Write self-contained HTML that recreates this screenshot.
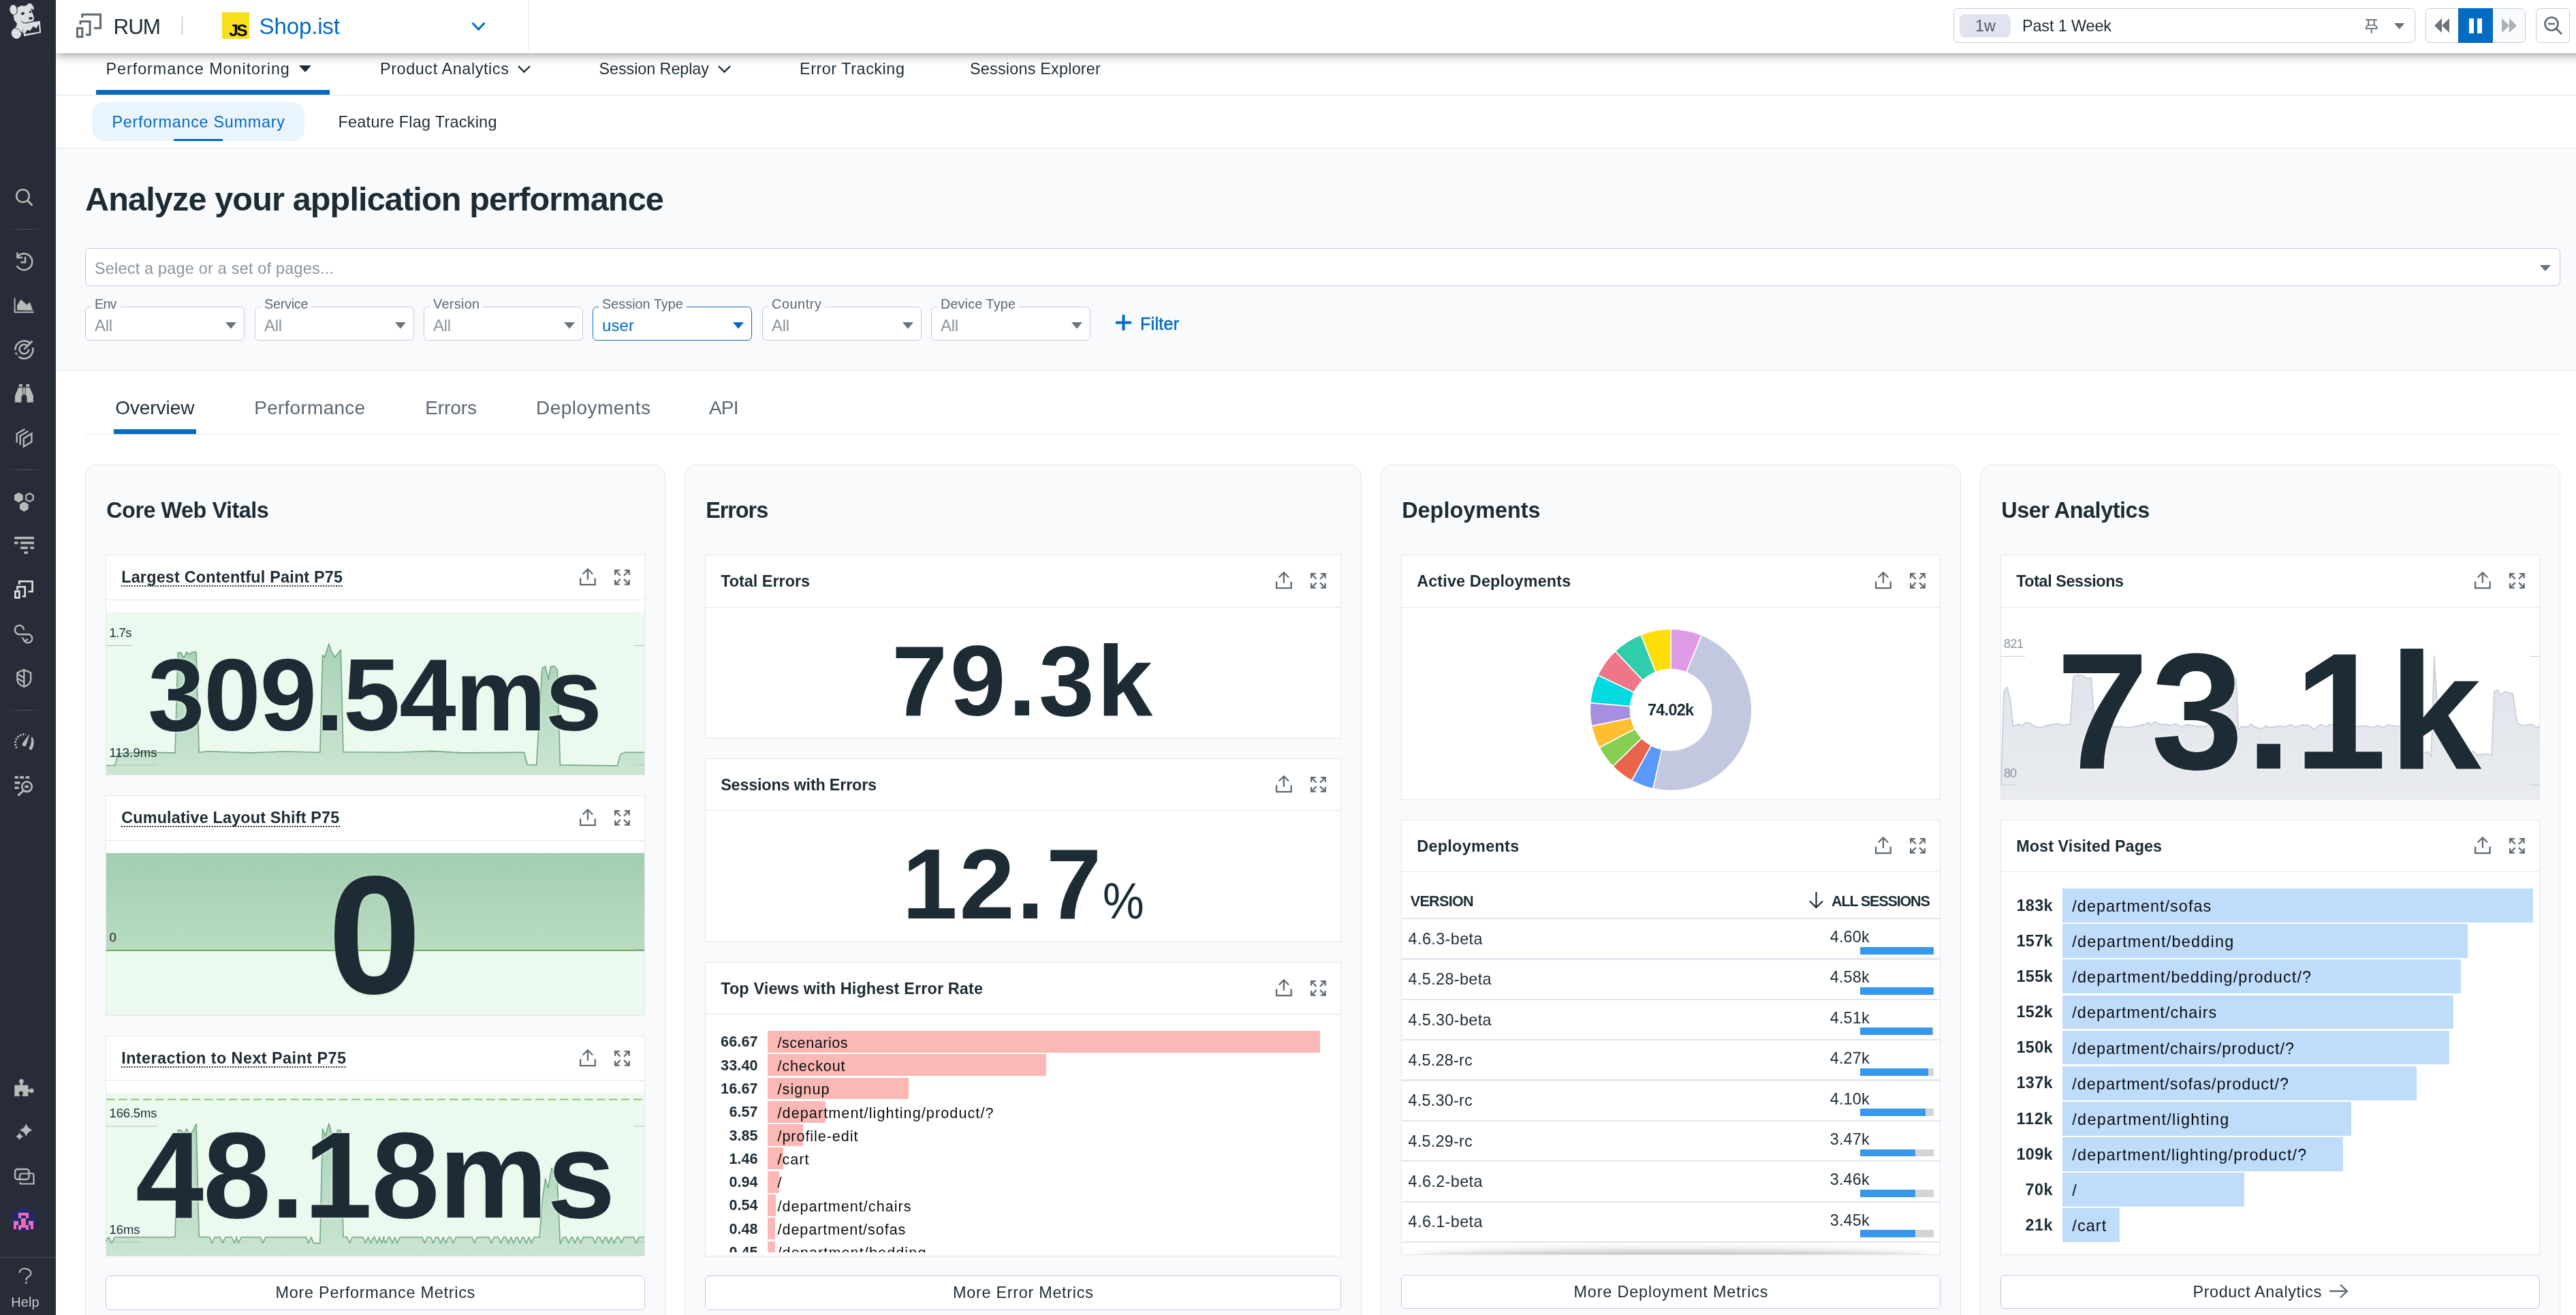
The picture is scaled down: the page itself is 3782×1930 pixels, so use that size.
<!DOCTYPE html>
<html lang="en"><head><meta charset="utf-8"><title>RUM Performance Summary</title>
<style>
html,body{margin:0;padding:0;}
body{width:3782px;height:1930px;overflow:hidden;position:relative;background:#fff;font-family:"Liberation Sans",sans-serif;color:#1c2b34;}
.t{position:absolute;white-space:nowrap;line-height:1;}
div{box-sizing:border-box;}
svg{overflow:visible;}
#root{position:absolute;left:0;top:0;width:3782px;height:1930px;overflow:hidden;opacity:0.9999;}
</style></head><body><div id="root">
<div style="position:absolute;left:82px;top:218px;width:3700px;height:326px;background:#f9fafb;border-bottom:1px solid #e2e5ed;"></div>
<div style="position:absolute;left:82px;top:78px;width:3700px;height:62px;background:#fff;border-bottom:1px solid #e2e5ed;"></div>
<div style="position:absolute;left:82px;top:140px;width:3700px;height:78px;background:#fff;border-bottom:1px solid #e2e5ed;"></div>
<div style="position:absolute;left:82px;top:0px;width:3760px;height:78px;background:#fff;box-shadow:0 3px 14px 0 rgba(0,0,0,0.38);z-index:5;"></div>
<div style="position:absolute;left:0;top:0;width:3782px;height:78px;z-index:6;">
<svg style="position:absolute;left:0px;top:0px;" width="200" height="78" viewBox="0 0 200 78"><path d="M120.7 26V21.3H147.5V41.2H138" fill="none" stroke="#5c6873" stroke-width="3"/><path d="M118 36V31.4H132.1V50.9H126" fill="none" stroke="#5c6873" stroke-width="3"/><rect x="113.5" y="41.4" width="7.3" height="12.6" fill="none" stroke="#5c6873" stroke-width="3"/></svg>
<span class="t" style="left:166.6px;top:23.6px;font-size:31.5px;letter-spacing:-1.12px;">RUM</span>
<div style="position:absolute;left:266px;top:24px;width:2.8px;height:27px;background:#e1e4ef;border-radius:1px;"></div>
<div style="position:absolute;left:326px;top:18px;width:40px;height:39px;background:#f7df1e;"></div>
<span class="t" style="left:336.2px;top:33.4px;font-size:24.5px;font-weight:700;color:#000;letter-spacing:-2.47px;">JS</span>
<span class="t" style="left:380.5px;top:22.2px;font-size:33.2px;color:#006bc2;letter-spacing:-0.21px;">Shop.ist</span>
<svg style="position:absolute;left:692px;top:32px;" width="22" height="14" viewBox="0 0 22 14"><path d="M1.5 1.5L10.5 11L19.5 1.5" fill="none" stroke="#006bc2" stroke-width="3"/></svg>
<div style="position:absolute;left:776px;top:0px;width:1px;height:78px;background:#e2e5ed;"></div>
<div style="position:absolute;left:2868px;top:12px;width:678px;height:51px;background:#fff;border:1px solid #c2c8e0;border-radius:6.5px;"></div>
<div style="position:absolute;left:2877px;top:20.5px;width:75px;height:34.5px;background:#e1e4ef;border-radius:8px;"></div>
<span class="t" style="left:2900.0px;top:27.4px;font-size:23.4px;color:#4f5a63;letter-spacing:0.09px;">1w</span>
<span class="t" style="left:2969.0px;top:27.4px;font-size:23.4px;letter-spacing:-0.12px;">Past 1 Week</span>
<svg style="position:absolute;left:3472px;top:28px;" width="20" height="22" viewBox="0 0 20 22"><g fill="none" stroke="#5f6a72"><path d="M1.2 1.05H17.9" stroke-width="1.8"/><path d="M5.25 1.9V9M13.8 1.9V9M9.75 14.7V20.9" stroke-width="1.9"/><path d="M5.25 9H13.8M0.8 13.95H18.7M1.7 13.9C1.7 11.3 3 9.6 5.3 9M17.8 13.9C17.8 11.3 16.2 9.6 13.8 9" stroke-width="1.7"/></g></svg>
<svg style="position:absolute;left:3514.9px;top:34.2px;" width="15.4" height="8.7" viewBox="0 0 15.4 8.7"><path d="M0 0h15.4l-7.7 8.7z" fill="#6a737c"/></svg>
<div style="position:absolute;left:3561px;top:12px;width:147px;height:51px;background:#fff;border:1px solid #c2c8e0;border-radius:6.5px;overflow:hidden;"><div style="position:absolute;left:47px;top:-1px;width:51px;height:51px;background:#006bc2;"></div><div style="position:absolute;left:98px;top:-1px;width:49px;height:51px;background:#f9fafb;"></div></div>
<div style="position:absolute;left:3609px;top:12px;width:51px;height:51px;background:#006bc2;"></div>
<svg style="position:absolute;left:3574px;top:27px;" width="23" height="21" viewBox="0 0 23 21"><path d="M11 0v21L0 10.5zM22 0v21L11 10.5z" fill="#6a737c"/></svg>
<svg style="position:absolute;left:3625px;top:26.5px;" width="19" height="22" viewBox="0 0 19 22"><rect x="0" y="0" width="7" height="22" fill="#fff"/><rect x="12" y="0" width="7" height="22" fill="#fff"/></svg>
<svg style="position:absolute;left:3673px;top:27px;" width="23" height="21" viewBox="0 0 23 21"><path d="M0 0v21l11-10.5zM11 0v21l11-10.5z" fill="#abb0b5"/></svg>
<div style="position:absolute;left:3723px;top:12px;width:50px;height:51px;background:#fff;border:1px solid #c2c8e0;border-radius:6.5px;"></div>
<svg style="position:absolute;left:3735px;top:24px;" width="28" height="27" viewBox="0 0 28 27"><circle cx="11" cy="11" r="9.5" fill="none" stroke="#5c6873" stroke-width="2.6"/><path d="M6 11h10M18 18l8 8" fill="none" stroke="#5c6873" stroke-width="2.6"/></svg>
</div>
<span class="t" style="left:155.5px;top:90.2px;font-size:23.4px;letter-spacing:0.94px;">Performance Monitoring</span>
<svg style="position:absolute;left:439px;top:96px;" width="18" height="10" viewBox="0 0 18 10"><path d="M0 0h18l-9 10z" fill="#1c2b34"/></svg>
<div style="position:absolute;left:141px;top:132px;width:343px;height:7px;background:#006bc2;"></div>
<span class="t" style="left:558.0px;top:90.2px;font-size:23.4px;letter-spacing:0.59px;">Product Analytics</span>
<svg style="position:absolute;left:760px;top:96px;" width="19" height="11" viewBox="0 0 19 11"><path d="M1 1l8.5 8.5L18 1" fill="none" stroke="#1c2b34" stroke-width="2.4"/></svg>
<span class="t" style="left:879.5px;top:90.2px;font-size:23.4px;letter-spacing:-0.08px;">Session Replay</span>
<svg style="position:absolute;left:1054px;top:96px;" width="19" height="11" viewBox="0 0 19 11"><path d="M1 1l8.5 8.5L18 1" fill="none" stroke="#1c2b34" stroke-width="2.4"/></svg>
<span class="t" style="left:1174.0px;top:90.2px;font-size:23.4px;letter-spacing:0.54px;">Error Tracking</span>
<span class="t" style="left:1424.0px;top:90.2px;font-size:23.4px;letter-spacing:0.21px;">Sessions Explorer</span>
<div style="position:absolute;left:135px;top:150px;width:312px;height:57px;background:#eaf4fc;border-radius:17px;"></div>
<span class="t" style="left:164.5px;top:167.9px;font-size:23.4px;color:#006bc2;letter-spacing:0.72px;">Performance Summary</span>
<div style="position:absolute;left:255px;top:204px;width:72px;height:3px;background:#006bc2;"></div>
<span class="t" style="left:496.5px;top:167.9px;font-size:23.4px;letter-spacing:0.27px;">Feature Flag Tracking</span>
<span class="t" style="left:125.0px;top:267.5px;font-size:48.6px;font-weight:700;letter-spacing:-0.87px;">Analyze your application performance</span>
<div style="position:absolute;left:125px;top:364px;width:3634px;height:56px;background:#fff;border:1px solid #c2c8e0;border-radius:6.5px;"></div>
<span class="t" style="left:139.0px;top:383.4px;font-size:23.4px;color:#8a949c;letter-spacing:0.23px;">Select a page or a set of pages...</span>
<svg style="position:absolute;left:3729px;top:388.5px;" width="16" height="9" viewBox="0 0 16 9"><path d="M0 0h16l-8 9z" fill="#6a737c"/></svg>
<div style="position:absolute;left:125px;top:450px;width:233.5px;height:50px;background:#fff;border:1px solid #c2c8e0;border-radius:6.5px;"></div>
<div style="position:absolute;left:134px;top:446px;width:42.5px;height:8px;background:linear-gradient(#f9fafb 55%,#fff 55%);"></div>
<span class="t" style="left:139.0px;top:436.8px;font-size:19.8px;color:#5c6873;letter-spacing:-0.81px;">Env</span>
<span class="t" style="left:139.0px;top:466.1px;font-size:24px;color:#8a949c;letter-spacing:-0.34px;">All</span>
<svg style="position:absolute;left:330.5px;top:473px;" width="16" height="9.5" viewBox="0 0 16 9.5"><path d="M0 0h16l-8 9.5z" fill="#6a737c"/></svg>
<div style="position:absolute;left:374px;top:450px;width:233.5px;height:50px;background:#fff;border:1px solid #c2c8e0;border-radius:6.5px;"></div>
<div style="position:absolute;left:383px;top:446px;width:74.5px;height:8px;background:linear-gradient(#f9fafb 55%,#fff 55%);"></div>
<span class="t" style="left:388.0px;top:436.8px;font-size:19.8px;color:#5c6873;letter-spacing:-0.25px;">Service</span>
<span class="t" style="left:388.0px;top:466.1px;font-size:24px;color:#8a949c;letter-spacing:-0.34px;">All</span>
<svg style="position:absolute;left:579.5px;top:473px;" width="16" height="9.5" viewBox="0 0 16 9.5"><path d="M0 0h16l-8 9.5z" fill="#6a737c"/></svg>
<div style="position:absolute;left:622px;top:450px;width:233.5px;height:50px;background:#fff;border:1px solid #c2c8e0;border-radius:6.5px;"></div>
<div style="position:absolute;left:631px;top:446px;width:78px;height:8px;background:linear-gradient(#f9fafb 55%,#fff 55%);"></div>
<span class="t" style="left:636.0px;top:436.8px;font-size:19.8px;color:#5c6873;letter-spacing:0.33px;">Version</span>
<span class="t" style="left:636.0px;top:466.1px;font-size:24px;color:#8a949c;letter-spacing:-0.34px;">All</span>
<svg style="position:absolute;left:827.5px;top:473px;" width="16" height="9.5" viewBox="0 0 16 9.5"><path d="M0 0h16l-8 9.5z" fill="#6a737c"/></svg>
<div style="position:absolute;left:870px;top:450px;width:233.5px;height:50px;background:#fff;border:1.5px solid #006bc2;border-radius:6.5px;"></div>
<div style="position:absolute;left:879px;top:446px;width:129px;height:8px;background:linear-gradient(#f9fafb 55%,#fff 55%);"></div>
<span class="t" style="left:884.0px;top:436.8px;font-size:19.8px;color:#5c6873;letter-spacing:0.04px;">Session Type</span>
<span class="t" style="left:884.0px;top:466.1px;font-size:24px;color:#006bc2;letter-spacing:0.10px;">user</span>
<svg style="position:absolute;left:1075.5px;top:473px;" width="16" height="9.5" viewBox="0 0 16 9.5"><path d="M0 0h16l-8 9.5z" fill="#006bc2"/></svg>
<div style="position:absolute;left:1119px;top:450px;width:233.5px;height:50px;background:#fff;border:1px solid #c2c8e0;border-radius:6.5px;"></div>
<div style="position:absolute;left:1128px;top:446px;width:83px;height:8px;background:linear-gradient(#f9fafb 55%,#fff 55%);"></div>
<span class="t" style="left:1133.0px;top:436.8px;font-size:19.8px;color:#5c6873;letter-spacing:0.61px;">Country</span>
<span class="t" style="left:1133.0px;top:466.1px;font-size:24px;color:#8a949c;letter-spacing:-0.34px;">All</span>
<svg style="position:absolute;left:1324.5px;top:473px;" width="16" height="9.5" viewBox="0 0 16 9.5"><path d="M0 0h16l-8 9.5z" fill="#6a737c"/></svg>
<div style="position:absolute;left:1367px;top:450px;width:233.5px;height:50px;background:#fff;border:1px solid #c2c8e0;border-radius:6.5px;"></div>
<div style="position:absolute;left:1376px;top:446px;width:120px;height:8px;background:linear-gradient(#f9fafb 55%,#fff 55%);"></div>
<span class="t" style="left:1381.0px;top:436.8px;font-size:19.8px;color:#5c6873;letter-spacing:0.14px;">Device Type</span>
<span class="t" style="left:1381.0px;top:466.1px;font-size:24px;color:#8a949c;letter-spacing:-0.34px;">All</span>
<svg style="position:absolute;left:1572.5px;top:473px;" width="16" height="9.5" viewBox="0 0 16 9.5"><path d="M0 0h16l-8 9.5z" fill="#6a737c"/></svg>
<svg style="position:absolute;left:1638px;top:462px;" width="23" height="23" viewBox="0 0 23 23"><path d="M11.5 0v23M0 11.5h23" stroke="#006bc2" stroke-width="4" fill="none"/></svg>
<span class="t" style="left:1674.0px;top:462.5px;font-size:25px;color:#006bc2;letter-spacing:0.29px;-webkit-text-stroke:0.5px #006bc2;">Filter</span>
<span class="t" style="left:169.2px;top:585.0px;font-size:28px;letter-spacing:-0.06px;">Overview</span>
<div style="position:absolute;left:167px;top:630px;width:121px;height:7px;background:#006bc2;"></div>
<div style="position:absolute;left:125px;top:637px;width:3634px;height:1px;background:#e2e5ed;"></div>
<span class="t" style="left:373.2px;top:585.0px;font-size:28px;color:#5c6873;letter-spacing:0.27px;">Performance</span>
<span class="t" style="left:624.2px;top:585.0px;font-size:28px;color:#5c6873;letter-spacing:-0.10px;">Errors</span>
<span class="t" style="left:787.0px;top:585.0px;font-size:28px;color:#5c6873;letter-spacing:0.46px;">Deployments</span>
<span class="t" style="left:1041.0px;top:585.0px;font-size:28px;color:#5c6873;letter-spacing:-0.82px;">API</span>
<div style="position:absolute;left:125px;top:682px;width:852px;height:1300px;background:#f9fafb;border:1px solid #e2e5ed;border-radius:17px;"></div>
<span class="t" style="left:156.2px;top:733.3px;font-size:32.4px;font-weight:700;letter-spacing:-0.48px;">Core Web Vitals</span>
<div style="position:absolute;left:1005px;top:682px;width:994px;height:1300px;background:#f9fafb;border:1px solid #e2e5ed;border-radius:17px;"></div>
<span class="t" style="left:1036.2px;top:733.3px;font-size:32.4px;font-weight:700;letter-spacing:-1.05px;">Errors</span>
<div style="position:absolute;left:2027px;top:682px;width:852px;height:1300px;background:#f9fafb;border:1px solid #e2e5ed;border-radius:17px;"></div>
<span class="t" style="left:2058.2px;top:733.3px;font-size:32.4px;font-weight:700;">Deployments</span>
<div style="position:absolute;left:2907px;top:682px;width:852px;height:1300px;background:#f9fafb;border:1px solid #e2e5ed;border-radius:17px;"></div>
<span class="t" style="left:2938.2px;top:733.3px;font-size:32.4px;font-weight:700;letter-spacing:-0.45px;">User Analytics</span>
<div style="position:absolute;left:155px;top:814px;width:792px;height:324px;background:#fff;border:1px solid #e2e5ed;"></div>
<div style="position:absolute;left:155px;top:880px;width:792px;height:1px;background:#e2e5ed;"></div>
<span class="t" style="left:178.2px;top:836.4px;font-size:23.4px;font-weight:700;letter-spacing:0.19px;">Largest Contentful Paint P75</span>
<div style="position:absolute;left:178px;top:859.0px;width:326px;height:2px;background-image:linear-gradient(90deg,#1c2b34 50%,transparent 50%);background-size:3.8px 2px;"></div>
<svg style="position:absolute;left:850.9px;top:833.75px;" width="24" height="25" viewBox="0 0 24 25"><path d="M1.1 14.4V24.1H22.7V14.4M11.9 16.8V1.6M4.7 8.5L11.9 1.3L19.1 8.5" fill="none" stroke="#5e6972" stroke-width="2.3"/></svg>
<svg style="position:absolute;left:902px;top:835.75px;" width="23" height="23" viewBox="0 0 23 23"><path d="M1.1 7.8V1.1H7.8M1.5 1.5L8.7 8.7M15 1.1H21.7V7.8M21.3 1.5L14.1 8.7M1.1 15V21.7H7.8M1.5 21.3L8.7 14.1M15 21.7H21.7V15M21.3 21.3L14.1 14.1" fill="none" stroke="#5e6972" stroke-width="2.2"/></svg>
<div style="position:absolute;left:155px;top:1167px;width:792px;height:324px;background:#fff;border:1px solid #e2e5ed;"></div>
<div style="position:absolute;left:155px;top:1233px;width:792px;height:1px;background:#e2e5ed;"></div>
<span class="t" style="left:178.2px;top:1189.4px;font-size:23.4px;font-weight:700;letter-spacing:0.16px;">Cumulative Layout Shift P75</span>
<div style="position:absolute;left:178px;top:1212.0px;width:321px;height:2px;background-image:linear-gradient(90deg,#1c2b34 50%,transparent 50%);background-size:3.8px 2px;"></div>
<svg style="position:absolute;left:850.9px;top:1186.75px;" width="24" height="25" viewBox="0 0 24 25"><path d="M1.1 14.4V24.1H22.7V14.4M11.9 16.8V1.6M4.7 8.5L11.9 1.3L19.1 8.5" fill="none" stroke="#5e6972" stroke-width="2.3"/></svg>
<svg style="position:absolute;left:902px;top:1188.75px;" width="23" height="23" viewBox="0 0 23 23"><path d="M1.1 7.8V1.1H7.8M1.5 1.5L8.7 8.7M15 1.1H21.7V7.8M21.3 1.5L14.1 8.7M1.1 15V21.7H7.8M1.5 21.3L8.7 14.1M15 21.7H21.7V15M21.3 21.3L14.1 14.1" fill="none" stroke="#5e6972" stroke-width="2.2"/></svg>
<div style="position:absolute;left:155px;top:1520px;width:792px;height:324px;background:#fff;border:1px solid #e2e5ed;"></div>
<div style="position:absolute;left:155px;top:1585px;width:792px;height:1px;background:#e2e5ed;"></div>
<span class="t" style="left:178.2px;top:1542.4px;font-size:23.4px;font-weight:700;letter-spacing:0.45px;">Interaction to Next Paint P75</span>
<div style="position:absolute;left:178px;top:1565.0px;width:331px;height:2px;background-image:linear-gradient(90deg,#1c2b34 50%,transparent 50%);background-size:3.8px 2px;"></div>
<svg style="position:absolute;left:850.9px;top:1539.75px;" width="24" height="25" viewBox="0 0 24 25"><path d="M1.1 14.4V24.1H22.7V14.4M11.9 16.8V1.6M4.7 8.5L11.9 1.3L19.1 8.5" fill="none" stroke="#5e6972" stroke-width="2.3"/></svg>
<svg style="position:absolute;left:902px;top:1541.75px;" width="23" height="23" viewBox="0 0 23 23"><path d="M1.1 7.8V1.1H7.8M1.5 1.5L8.7 8.7M15 1.1H21.7V7.8M21.3 1.5L14.1 8.7M1.1 15V21.7H7.8M1.5 21.3L8.7 14.1M15 21.7H21.7V15M21.3 21.3L14.1 14.1" fill="none" stroke="#5e6972" stroke-width="2.2"/></svg>
<div style="position:absolute;left:156px;top:899px;width:790px;height:238px;background:#ecf9ef;"></div>
<svg style="position:absolute;left:0;top:0" width="3782" height="1930"><defs><linearGradient id="g1" x1="0" y1="0" x2="0" y2="1"><stop offset="0" stop-color="#a9d2b7"/><stop offset="1" stop-color="#cbe5d2"/></linearGradient></defs><path d="M156.0 1123.5L168.6 1123.5L173.3 1105.8L212.1 1104.3L257.1 1104.9L261.2 957.7L265.5 957.7L269.6 966.1L274.2 956.8L278.0 960.8L282.0 957.1L288.2 957.1L292.2 1104.3L305.3 1102.7L367.4 1104.9L417.1 1103.0L469.9 1104.3L473.6 961.4L476.7 964.5L482.9 945.3L487.0 956.8L491.6 964.5L500.3 953.7L504.0 1103.7L584.8 1104.3L632.9 1102.4L678.0 1104.9L769.6 1104.3L774.2 1122.3L787.6 1122.9L796.0 980.7L800.6 977.9L805.3 997.1L808.4 978.5L814.0 977.9L818.3 983.2L822.4 1122.9L906.2 1123.9L910.9 1107.4L917.1 1104.3L946.0 1104.3L946 1137L156 1137Z" fill="url(#g1)"/><path d="M156.0 1123.5L168.6 1123.5L173.3 1105.8L212.1 1104.3L257.1 1104.9L261.2 957.7L265.5 957.7L269.6 966.1L274.2 956.8L278.0 960.8L282.0 957.1L288.2 957.1L292.2 1104.3L305.3 1102.7L367.4 1104.9L417.1 1103.0L469.9 1104.3L473.6 961.4L476.7 964.5L482.9 945.3L487.0 956.8L491.6 964.5L500.3 953.7L504.0 1103.7L584.8 1104.3L632.9 1102.4L678.0 1104.9L769.6 1104.3L774.2 1122.3L787.6 1122.9L796.0 980.7L800.6 977.9L805.3 997.1L808.4 978.5L814.0 977.9L818.3 983.2L822.4 1122.9L906.2 1123.9L910.9 1107.4L917.1 1104.3L946.0 1104.3" fill="none" stroke="#72a982" stroke-width="1.6" stroke-linejoin="round"/><path d="M156 947.5H194M156 1123H231M930.5 947.5H946M930.5 1123H946" stroke="#b3bdb9" stroke-width="1" fill="none"/></svg>
<span class="t" style="left:160.5px;top:920.0px;font-size:18.5px;letter-spacing:-0.66px;">1.7s</span>
<span class="t" style="left:160.5px;top:1096.0px;font-size:18.5px;letter-spacing:0.07px;">113.9ms</span>
<span class="t" style="left:217.0px;top:944.7px;font-size:150px;font-weight:700;letter-spacing:-1.23px;text-shadow:0 0 5px rgba(236,249,239,0.95),0 0 2px rgba(236,249,239,0.9);">309.54ms</span>
<div style="position:absolute;left:156px;top:1252px;width:790px;height:238px;background:#ecf9ef;"></div>
<div style="position:absolute;left:156px;top:1252px;width:790px;height:142.5px;background:linear-gradient(#a3cdb0,#b9dcc3);"></div>
<div style="position:absolute;left:156px;top:1393.5px;width:790px;height:2.2px;background:#6fb04a;"></div>
<div style="position:absolute;left:931px;top:1392.5px;width:15px;height:2px;background:#9aa8a0;"></div>
<span class="t" style="left:160.5px;top:1367.0px;font-size:18.5px;">0</span>
<span class="t" style="left:481.3px;top:1248.6px;font-size:247px;font-weight:700;text-shadow:0 0 4px rgba(200,230,210,0.9);">0</span>
<div style="position:absolute;left:156px;top:1604px;width:790px;height:239px;background:#ecf9ef;"></div>
<svg style="position:absolute;left:0;top:0" width="3782" height="1930"><defs><linearGradient id="g3" x1="0" y1="0" x2="0" y2="1"><stop offset="0" stop-color="#a9d2b7"/><stop offset="1" stop-color="#cbe5d2"/></linearGradient></defs><path d="M156.0 1821.4L159.3 1815.8L164.0 1824.5L168.6 1815.8L257.1 1815.8L261.2 1658.9L266.5 1658.9L269.6 1664.5L274.2 1656.8L277.3 1663.0L282.0 1662.0L288.2 1649.6L292.2 1815.2L307.8 1815.8L311.5 1824.5L315.2 1815.8L323.3 1815.8L327.0 1824.5L330.7 1815.8L340.4 1815.8L344.1 1824.5L347.8 1815.8L346.6 1815.8L350.3 1824.5L354.0 1815.8L382.3 1815.8L386.0 1824.5L389.8 1815.8L449.7 1815.8L452.8 1824.5L456.8 1815.8L460.6 1824.5L469.9 1824.5L473.6 1656.8L477.6 1667.6L482.9 1649.0L487.0 1664.5L491.6 1673.2L495.3 1658.9L500.3 1658.9L504.0 1815.2L509.6 1815.8L513.4 1824.5L517.1 1815.8L532.9 1815.8L536.6 1824.5L540.4 1815.8L540.7 1815.8L544.4 1824.5L548.1 1815.8L550.0 1815.8L553.7 1824.5L557.5 1815.8L556.8 1815.8L560.6 1824.5L564.3 1815.8L562.4 1815.8L566.1 1824.5L569.9 1815.8L572.4 1815.8L576.1 1824.5L579.8 1815.8L579.5 1815.8L583.2 1824.5L587.0 1815.8L619.9 1815.8L623.6 1824.5L627.3 1815.8L632.3 1815.8L636.0 1824.5L639.8 1815.8L643.2 1815.8L646.9 1824.5L650.6 1815.8L650.9 1815.8L654.7 1824.5L658.4 1815.8L661.8 1815.8L665.5 1824.5L669.3 1815.8L692.9 1815.8L696.6 1824.5L700.3 1815.8L717.7 1815.8L721.4 1824.5L725.2 1815.8L731.7 1815.8L735.4 1824.5L739.1 1815.8L742.5 1815.8L746.3 1824.5L750.0 1815.8L750.3 1815.8L754.0 1824.5L757.8 1815.8L759.6 1815.8L763.4 1824.5L767.1 1815.8L768.9 1815.8L772.7 1824.5L776.4 1815.8L776.7 1815.8L780.4 1824.5L784.2 1815.8L792.2 1815.8L796.0 1763.9L800.6 1729.8L804.7 1743.7L809.9 1714.2L818.3 1734.4L822.4 1826.0L827.0 1815.8L831.1 1815.8L834.8 1824.5L838.5 1815.8L840.4 1815.8L844.1 1824.5L847.8 1815.8L848.8 1815.8L852.5 1824.5L856.2 1815.8L869.9 1815.8L873.6 1824.5L877.3 1815.8L880.7 1815.8L884.5 1824.5L888.2 1815.8L890.1 1815.8L893.8 1824.5L897.5 1815.8L897.8 1815.8L901.6 1824.5L905.3 1815.8L908.7 1815.8L912.4 1824.5L916.1 1815.8L930.4 1815.8L934.2 1824.5L937.9 1815.8L946.0 1815.8L946 1843L156 1843Z" fill="url(#g3)"/><path d="M156.0 1821.4L159.3 1815.8L164.0 1824.5L168.6 1815.8L257.1 1815.8L261.2 1658.9L266.5 1658.9L269.6 1664.5L274.2 1656.8L277.3 1663.0L282.0 1662.0L288.2 1649.6L292.2 1815.2L307.8 1815.8L311.5 1824.5L315.2 1815.8L323.3 1815.8L327.0 1824.5L330.7 1815.8L340.4 1815.8L344.1 1824.5L347.8 1815.8L346.6 1815.8L350.3 1824.5L354.0 1815.8L382.3 1815.8L386.0 1824.5L389.8 1815.8L449.7 1815.8L452.8 1824.5L456.8 1815.8L460.6 1824.5L469.9 1824.5L473.6 1656.8L477.6 1667.6L482.9 1649.0L487.0 1664.5L491.6 1673.2L495.3 1658.9L500.3 1658.9L504.0 1815.2L509.6 1815.8L513.4 1824.5L517.1 1815.8L532.9 1815.8L536.6 1824.5L540.4 1815.8L540.7 1815.8L544.4 1824.5L548.1 1815.8L550.0 1815.8L553.7 1824.5L557.5 1815.8L556.8 1815.8L560.6 1824.5L564.3 1815.8L562.4 1815.8L566.1 1824.5L569.9 1815.8L572.4 1815.8L576.1 1824.5L579.8 1815.8L579.5 1815.8L583.2 1824.5L587.0 1815.8L619.9 1815.8L623.6 1824.5L627.3 1815.8L632.3 1815.8L636.0 1824.5L639.8 1815.8L643.2 1815.8L646.9 1824.5L650.6 1815.8L650.9 1815.8L654.7 1824.5L658.4 1815.8L661.8 1815.8L665.5 1824.5L669.3 1815.8L692.9 1815.8L696.6 1824.5L700.3 1815.8L717.7 1815.8L721.4 1824.5L725.2 1815.8L731.7 1815.8L735.4 1824.5L739.1 1815.8L742.5 1815.8L746.3 1824.5L750.0 1815.8L750.3 1815.8L754.0 1824.5L757.8 1815.8L759.6 1815.8L763.4 1824.5L767.1 1815.8L768.9 1815.8L772.7 1824.5L776.4 1815.8L776.7 1815.8L780.4 1824.5L784.2 1815.8L792.2 1815.8L796.0 1763.9L800.6 1729.8L804.7 1743.7L809.9 1714.2L818.3 1734.4L822.4 1826.0L827.0 1815.8L831.1 1815.8L834.8 1824.5L838.5 1815.8L840.4 1815.8L844.1 1824.5L847.8 1815.8L848.8 1815.8L852.5 1824.5L856.2 1815.8L869.9 1815.8L873.6 1824.5L877.3 1815.8L880.7 1815.8L884.5 1824.5L888.2 1815.8L890.1 1815.8L893.8 1824.5L897.5 1815.8L897.8 1815.8L901.6 1824.5L905.3 1815.8L908.7 1815.8L912.4 1824.5L916.1 1815.8L930.4 1815.8L934.2 1824.5L937.9 1815.8L946.0 1815.8" fill="none" stroke="#72a982" stroke-width="1.6" stroke-linejoin="round"/><path d="M156 1653H231M156 1823H206M930.5 1653H946M930.5 1823H946" stroke="#b3bdb9" stroke-width="1" fill="none"/><path d="M156 1613.6H946" stroke="#7ac25a" stroke-width="1.8" stroke-dasharray="12.5 5.5" fill="none"/></svg>
<span class="t" style="left:160.5px;top:1624.7px;font-size:18.5px;letter-spacing:-0.16px;">166.5ms</span>
<span class="t" style="left:160.5px;top:1796.0px;font-size:18.5px;letter-spacing:-0.08px;">16ms</span>
<span class="t" style="left:199.0px;top:1635.3px;font-size:180px;font-weight:700;letter-spacing:-1.02px;text-shadow:0 0 5px rgba(236,249,239,0.95),0 0 2px rgba(236,249,239,0.9);">48.18ms</span>
<div style="position:absolute;left:155px;top:1872px;width:792px;height:51px;background:#fff;border:1px solid #c2c8e0;border-radius:7px;"></div>
<span class="t" style="left:404.5px;top:1886.3px;font-size:23.4px;letter-spacing:0.75px;">More Performance Metrics</span>
<div style="position:absolute;left:1035px;top:814px;width:934px;height:270px;background:#fff;border:1px solid #e2e5ed;"></div>
<div style="position:absolute;left:1035px;top:891px;width:934px;height:1px;background:#e2e5ed;"></div>
<span class="t" style="left:1058.2px;top:841.7px;font-size:23.4px;font-weight:700;">Total Errors</span>
<svg style="position:absolute;left:1872.9px;top:839px;" width="24" height="25" viewBox="0 0 24 25"><path d="M1.1 14.4V24.1H22.7V14.4M11.9 16.8V1.6M4.7 8.5L11.9 1.3L19.1 8.5" fill="none" stroke="#5e6972" stroke-width="2.3"/></svg>
<svg style="position:absolute;left:1924px;top:841px;" width="23" height="23" viewBox="0 0 23 23"><path d="M1.1 7.8V1.1H7.8M1.5 1.5L8.7 8.7M15 1.1H21.7V7.8M21.3 1.5L14.1 8.7M1.1 15V21.7H7.8M1.5 21.3L8.7 14.1M15 21.7H21.7V15M21.3 21.3L14.1 14.1" fill="none" stroke="#5e6972" stroke-width="2.2"/></svg>
<span class="t" style="left:1309.3px;top:925.5px;font-size:147px;font-weight:700;letter-spacing:3.78px;">79.3k</span>
<div style="position:absolute;left:1035px;top:1113px;width:934px;height:270px;background:#fff;border:1px solid #e2e5ed;"></div>
<div style="position:absolute;left:1035px;top:1189px;width:934px;height:1px;background:#e2e5ed;"></div>
<span class="t" style="left:1058.2px;top:1140.7px;font-size:23.4px;font-weight:700;letter-spacing:-0.20px;">Sessions with Errors</span>
<svg style="position:absolute;left:1872.9px;top:1138px;" width="24" height="25" viewBox="0 0 24 25"><path d="M1.1 14.4V24.1H22.7V14.4M11.9 16.8V1.6M4.7 8.5L11.9 1.3L19.1 8.5" fill="none" stroke="#5e6972" stroke-width="2.3"/></svg>
<svg style="position:absolute;left:1924px;top:1140px;" width="23" height="23" viewBox="0 0 23 23"><path d="M1.1 7.8V1.1H7.8M1.5 1.5L8.7 8.7M15 1.1H21.7V7.8M21.3 1.5L14.1 8.7M1.1 15V21.7H7.8M1.5 21.3L8.7 14.1M15 21.7H21.7V15M21.3 21.3L14.1 14.1" fill="none" stroke="#5e6972" stroke-width="2.2"/></svg>
<span class="t" style="left:1324.5px;top:1225.1px;font-size:146px;font-weight:700;letter-spacing:2.81px;">12.7</span>
<span class="t" style="left:1618.5px;top:1285.2px;font-size:75px;transform:scaleX(0.91);transform-origin:0 0;">%</span>
<div style="position:absolute;left:1035px;top:1412px;width:934px;height:432px;background:#fff;border:1px solid #e2e5ed;"></div>
<div style="position:absolute;left:1035px;top:1488px;width:934px;height:1px;background:#e2e5ed;"></div>
<span class="t" style="left:1058.2px;top:1439.7px;font-size:23.4px;font-weight:700;letter-spacing:0.15px;">Top Views with Highest Error Rate</span>
<svg style="position:absolute;left:1872.9px;top:1437px;" width="24" height="25" viewBox="0 0 24 25"><path d="M1.1 14.4V24.1H22.7V14.4M11.9 16.8V1.6M4.7 8.5L11.9 1.3L19.1 8.5" fill="none" stroke="#5e6972" stroke-width="2.3"/></svg>
<svg style="position:absolute;left:1924px;top:1439px;" width="23" height="23" viewBox="0 0 23 23"><path d="M1.1 7.8V1.1H7.8M1.5 1.5L8.7 8.7M15 1.1H21.7V7.8M21.3 1.5L14.1 8.7M1.1 15V21.7H7.8M1.5 21.3L8.7 14.1M15 21.7H21.7V15M21.3 21.3L14.1 14.1" fill="none" stroke="#5e6972" stroke-width="2.2"/></svg>
<div style="position:absolute;left:1036px;top:1490px;width:932px;height:347.5px;overflow:hidden;">
<div style="position:absolute;left:91px;top:23.0px;width:811px;height:31.8px;background:#fbb8b5;"></div>
<span class="t" style="left:22.1px;top:28.4px;font-size:21.6px;font-weight:700;letter-spacing:0.11px;">66.67</span>
<span class="t" style="left:105.5px;top:29.6px;font-size:21.6px;color:#0a0d10;letter-spacing:0.51px;">/scenarios</span>
<div style="position:absolute;left:91px;top:57.289999999999964px;width:409px;height:31.8px;background:#fbb8b5;"></div>
<span class="t" style="left:22.1px;top:62.7px;font-size:21.6px;font-weight:700;letter-spacing:0.11px;">33.40</span>
<span class="t" style="left:105.5px;top:63.9px;font-size:21.6px;color:#0a0d10;letter-spacing:0.82px;">/checkout</span>
<div style="position:absolute;left:91px;top:91.57999999999993px;width:207px;height:31.8px;background:#fbb8b5;"></div>
<span class="t" style="left:22.1px;top:97.0px;font-size:21.6px;font-weight:700;letter-spacing:0.11px;">16.67</span>
<span class="t" style="left:105.5px;top:98.2px;font-size:21.6px;color:#0a0d10;letter-spacing:1.06px;">/signup</span>
<div style="position:absolute;left:91px;top:125.86999999999989px;width:84.5px;height:31.8px;background:#fbb8b5;"></div>
<span class="t" style="left:34.6px;top:131.3px;font-size:21.6px;font-weight:700;letter-spacing:-0.01px;">6.57</span>
<span class="t" style="left:105.5px;top:132.5px;font-size:21.6px;color:#0a0d10;letter-spacing:1.08px;">/department/lighting/product/?</span>
<div style="position:absolute;left:91px;top:160.16000000000008px;width:52px;height:31.8px;background:#fbb8b5;"></div>
<span class="t" style="left:34.6px;top:165.6px;font-size:21.6px;font-weight:700;letter-spacing:-0.01px;">3.85</span>
<span class="t" style="left:105.5px;top:166.8px;font-size:21.6px;color:#0a0d10;letter-spacing:0.93px;">/profile-edit</span>
<div style="position:absolute;left:91px;top:194.45000000000005px;width:23px;height:31.8px;background:#fbb8b5;"></div>
<span class="t" style="left:34.6px;top:199.9px;font-size:21.6px;font-weight:700;letter-spacing:-0.01px;">1.46</span>
<span class="t" style="left:105.5px;top:201.1px;font-size:21.6px;color:#0a0d10;letter-spacing:1.00px;">/cart</span>
<div style="position:absolute;left:91px;top:228.74px;width:16.5px;height:31.8px;background:#fbb8b5;"></div>
<span class="t" style="left:34.6px;top:234.2px;font-size:21.6px;font-weight:700;letter-spacing:-0.01px;">0.94</span>
<span class="t" style="left:105.5px;top:235.4px;font-size:21.6px;color:#0a0d10;">/</span>
<div style="position:absolute;left:91px;top:263.03px;width:11.5px;height:31.8px;background:#fbb8b5;"></div>
<span class="t" style="left:34.6px;top:268.4px;font-size:21.6px;font-weight:700;letter-spacing:-0.01px;">0.54</span>
<span class="t" style="left:105.5px;top:269.6px;font-size:21.6px;color:#0a0d10;letter-spacing:1.01px;">/department/chairs</span>
<div style="position:absolute;left:91px;top:297.31999999999994px;width:11px;height:31.8px;background:#fbb8b5;"></div>
<span class="t" style="left:34.6px;top:302.7px;font-size:21.6px;font-weight:700;letter-spacing:-0.01px;">0.48</span>
<span class="t" style="left:105.5px;top:303.9px;font-size:21.6px;color:#0a0d10;letter-spacing:0.94px;">/department/sofas</span>
<div style="position:absolute;left:91px;top:331.6100000000001px;width:10.5px;height:31.8px;background:#fbb8b5;"></div>
<span class="t" style="left:34.6px;top:337.0px;font-size:21.6px;font-weight:700;letter-spacing:-0.01px;">0.45</span>
<span class="t" style="left:105.5px;top:338.2px;font-size:21.6px;color:#0a0d10;letter-spacing:1.10px;">/department/bedding</span>
</div>
<div style="position:absolute;left:1035px;top:1872px;width:934px;height:51px;background:#fff;border:1px solid #c2c8e0;border-radius:7px;"></div>
<span class="t" style="left:1399.0px;top:1886.3px;font-size:23.4px;letter-spacing:0.72px;">More Error Metrics</span>
<div style="position:absolute;left:2057px;top:814px;width:792px;height:360px;background:#fff;border:1px solid #e2e5ed;"></div>
<div style="position:absolute;left:2057px;top:891px;width:792px;height:1px;background:#e2e5ed;"></div>
<span class="t" style="left:2080.2px;top:841.7px;font-size:23.4px;font-weight:700;letter-spacing:0.14px;">Active Deployments</span>
<svg style="position:absolute;left:2752.9px;top:839px;" width="24" height="25" viewBox="0 0 24 25"><path d="M1.1 14.4V24.1H22.7V14.4M11.9 16.8V1.6M4.7 8.5L11.9 1.3L19.1 8.5" fill="none" stroke="#5e6972" stroke-width="2.3"/></svg>
<svg style="position:absolute;left:2804px;top:841px;" width="23" height="23" viewBox="0 0 23 23"><path d="M1.1 7.8V1.1H7.8M1.5 1.5L8.7 8.7M15 1.1H21.7V7.8M21.3 1.5L14.1 8.7M1.1 15V21.7H7.8M1.5 21.3L8.7 14.1M15 21.7H21.7V15M21.3 21.3L14.1 14.1" fill="none" stroke="#5e6972" stroke-width="2.2"/></svg>
<svg style="position:absolute;left:0;top:0" width="3782" height="1930"><path d="M2453.0 923.1A118.7 118.7 0 0 1 2498.4 932.1L2475.8 986.7A59.6 59.6 0 0 0 2453.0 982.2Z" fill="#df9ae8" stroke="#fff" stroke-width="1.6"/><path d="M2498.4 932.1A118.7 118.7 0 0 1 2426.9 1157.6L2439.9 1099.9A59.6 59.6 0 0 0 2475.8 986.7Z" fill="#c3c7df" stroke="#fff" stroke-width="1.6"/><path d="M2426.9 1157.6A118.7 118.7 0 0 1 2395.6 1145.7L2424.2 1094.0A59.6 59.6 0 0 0 2439.9 1099.9Z" fill="#5b98fb" stroke="#fff" stroke-width="1.6"/><path d="M2395.6 1145.7A118.7 118.7 0 0 1 2368.0 1124.7L2410.3 1083.4A59.6 59.6 0 0 0 2424.2 1094.0Z" fill="#e8644a" stroke="#fff" stroke-width="1.6"/><path d="M2368.0 1124.7A118.7 118.7 0 0 1 2348.0 1097.2L2400.3 1069.6A59.6 59.6 0 0 0 2410.3 1083.4Z" fill="#85d052" stroke="#fff" stroke-width="1.6"/><path d="M2348.0 1097.2A118.7 118.7 0 0 1 2336.7 1065.5L2394.6 1053.7A59.6 59.6 0 0 0 2400.3 1069.6Z" fill="#ffbf30" stroke="#fff" stroke-width="1.6"/><path d="M2336.7 1065.5A118.7 118.7 0 0 1 2334.8 1031.5L2393.6 1036.6A59.6 59.6 0 0 0 2394.6 1053.7Z" fill="#a78fdf" stroke="#fff" stroke-width="1.6"/><path d="M2334.8 1031.5A118.7 118.7 0 0 1 2345.9 990.7L2399.2 1016.1A59.6 59.6 0 0 0 2393.6 1036.6Z" fill="#00dbe0" stroke="#fff" stroke-width="1.6"/><path d="M2345.9 990.7A118.7 118.7 0 0 1 2371.4 955.6L2412.0 998.5A59.6 59.6 0 0 0 2399.2 1016.1Z" fill="#ef7689" stroke="#fff" stroke-width="1.6"/><path d="M2371.4 955.6A118.7 118.7 0 0 1 2409.1 931.5L2431.0 986.4A59.6 59.6 0 0 0 2412.0 998.5Z" fill="#2fcdab" stroke="#fff" stroke-width="1.6"/><path d="M2409.1 931.5A118.7 118.7 0 0 1 2453.0 923.1L2453.0 982.2A59.6 59.6 0 0 0 2431.0 986.4Z" fill="#ffdd0b" stroke="#fff" stroke-width="1.6"/></svg>
<span class="t" style="left:2419.0px;top:1030.9px;font-size:23.4px;font-weight:700;letter-spacing:-0.71px;">74.02k</span>
<div style="position:absolute;left:2057px;top:1203px;width:792px;height:639px;background:#fff;border:1px solid #e2e5ed;"></div>
<div style="position:absolute;left:2057px;top:1279px;width:792px;height:1px;background:#e2e5ed;"></div>
<span class="t" style="left:2080.2px;top:1230.7px;font-size:23.4px;font-weight:700;letter-spacing:0.31px;">Deployments</span>
<svg style="position:absolute;left:2752.9px;top:1228px;" width="24" height="25" viewBox="0 0 24 25"><path d="M1.1 14.4V24.1H22.7V14.4M11.9 16.8V1.6M4.7 8.5L11.9 1.3L19.1 8.5" fill="none" stroke="#5e6972" stroke-width="2.3"/></svg>
<svg style="position:absolute;left:2804px;top:1230px;" width="23" height="23" viewBox="0 0 23 23"><path d="M1.1 7.8V1.1H7.8M1.5 1.5L8.7 8.7M15 1.1H21.7V7.8M21.3 1.5L14.1 8.7M1.1 15V21.7H7.8M1.5 21.3L8.7 14.1M15 21.7H21.7V15M21.3 21.3L14.1 14.1" fill="none" stroke="#5e6972" stroke-width="2.2"/></svg>
<span class="t" style="left:2070.7px;top:1312.4px;font-size:21.6px;font-weight:700;letter-spacing:-0.70px;">VERSION</span>
<span class="t" style="left:2689.0px;top:1312.4px;font-size:21.6px;font-weight:700;letter-spacing:-1.19px;">ALL SESSIONS</span>
<svg style="position:absolute;left:2656px;top:1309px;" width="21" height="25" viewBox="0 0 21 25"><path d="M10.5 0v23M1 13.5l9.5 9.5 9.5-9.5" fill="none" stroke="#1c2b34" stroke-width="2.2"/></svg>
<div style="position:absolute;left:2058px;top:1347.1px;width:790px;height:2.2px;background:#e4e5e8;"></div>
<div style="position:absolute;left:2058px;top:1349.2px;width:790px;height:491.9px;overflow:hidden;">
<span class="t" style="left:9.6px;top:17.7px;font-size:23.4px;letter-spacing:0.40px;">4.6.3-beta</span>
<span class="t" style="left:628.7px;top:15.0px;font-size:23.4px;letter-spacing:0.21px;">4.60k</span>
<div style="position:absolute;left:673px;top:40.6px;width:108px;height:10.9px;background:#d3d4d6;"></div>
<div style="position:absolute;left:673px;top:40.6px;width:108.0px;height:10.9px;background:#3797ea;"></div>
<div style="position:absolute;left:0px;top:57.25px;width:790px;height:2.2px;background:#e2e5ed;"></div>
<span class="t" style="left:9.6px;top:77.0px;font-size:23.4px;letter-spacing:0.36px;">4.5.28-beta</span>
<span class="t" style="left:628.7px;top:74.3px;font-size:23.4px;letter-spacing:0.21px;">4.58k</span>
<div style="position:absolute;left:673px;top:99.95px;width:108px;height:10.9px;background:#d3d4d6;"></div>
<div style="position:absolute;left:673px;top:99.95px;width:107.568px;height:10.9px;background:#3797ea;"></div>
<div style="position:absolute;left:0px;top:116.60000000000001px;width:790px;height:2.2px;background:#e2e5ed;"></div>
<span class="t" style="left:9.6px;top:136.4px;font-size:23.4px;letter-spacing:0.36px;">4.5.30-beta</span>
<span class="t" style="left:628.7px;top:133.7px;font-size:23.4px;letter-spacing:0.21px;">4.51k</span>
<div style="position:absolute;left:673px;top:159.3px;width:108px;height:10.9px;background:#d3d4d6;"></div>
<div style="position:absolute;left:673px;top:159.3px;width:105.84px;height:10.9px;background:#3797ea;"></div>
<div style="position:absolute;left:0px;top:175.95000000000002px;width:790px;height:2.2px;background:#e2e5ed;"></div>
<span class="t" style="left:9.6px;top:195.7px;font-size:23.4px;letter-spacing:0.21px;">4.5.28-rc</span>
<span class="t" style="left:628.7px;top:193.0px;font-size:23.4px;letter-spacing:0.21px;">4.27k</span>
<div style="position:absolute;left:673px;top:218.65px;width:108px;height:10.9px;background:#d3d4d6;"></div>
<div style="position:absolute;left:673px;top:218.65px;width:100.224px;height:10.9px;background:#3797ea;"></div>
<div style="position:absolute;left:0px;top:235.3px;width:790px;height:2.2px;background:#e2e5ed;"></div>
<span class="t" style="left:9.6px;top:255.1px;font-size:23.4px;letter-spacing:0.21px;">4.5.30-rc</span>
<span class="t" style="left:628.7px;top:252.4px;font-size:23.4px;letter-spacing:0.21px;">4.10k</span>
<div style="position:absolute;left:673px;top:278.0px;width:108px;height:10.9px;background:#d3d4d6;"></div>
<div style="position:absolute;left:673px;top:278.0px;width:96.22800000000001px;height:10.9px;background:#3797ea;"></div>
<div style="position:absolute;left:0px;top:294.65px;width:790px;height:2.2px;background:#e2e5ed;"></div>
<span class="t" style="left:9.6px;top:314.4px;font-size:23.4px;letter-spacing:0.21px;">4.5.29-rc</span>
<span class="t" style="left:628.7px;top:311.7px;font-size:23.4px;letter-spacing:0.21px;">3.47k</span>
<div style="position:absolute;left:673px;top:337.35px;width:108px;height:10.9px;background:#d3d4d6;"></div>
<div style="position:absolute;left:673px;top:337.35px;width:81.432px;height:10.9px;background:#3797ea;"></div>
<div style="position:absolute;left:0px;top:354.0px;width:790px;height:2.2px;background:#e2e5ed;"></div>
<span class="t" style="left:9.6px;top:373.8px;font-size:23.4px;letter-spacing:0.40px;">4.6.2-beta</span>
<span class="t" style="left:628.7px;top:371.1px;font-size:23.4px;letter-spacing:0.21px;">3.46k</span>
<div style="position:absolute;left:673px;top:396.70000000000005px;width:108px;height:10.9px;background:#d3d4d6;"></div>
<div style="position:absolute;left:673px;top:396.70000000000005px;width:81.216px;height:10.9px;background:#3797ea;"></div>
<div style="position:absolute;left:0px;top:413.35px;width:790px;height:2.2px;background:#e2e5ed;"></div>
<span class="t" style="left:9.6px;top:433.1px;font-size:23.4px;letter-spacing:0.40px;">4.6.1-beta</span>
<span class="t" style="left:628.7px;top:430.4px;font-size:23.4px;letter-spacing:0.21px;">3.45k</span>
<div style="position:absolute;left:673px;top:456.05px;width:108px;height:10.9px;background:#d3d4d6;"></div>
<div style="position:absolute;left:673px;top:456.05px;width:81.0px;height:10.9px;background:#3797ea;"></div>
<div style="position:absolute;left:0px;top:472.7px;width:790px;height:2.2px;background:#e2e5ed;"></div>
<span class="t" style="left:9.6px;top:492.5px;font-size:23.4px;letter-spacing:0.36px;">4.5.29-beta</span>
<span class="t" style="left:628.7px;top:489.8px;font-size:23.4px;letter-spacing:0.21px;">3.36k</span>
<div style="position:absolute;left:673px;top:515.4px;width:108px;height:10.9px;background:#d3d4d6;"></div>
<div style="position:absolute;left:673px;top:515.4px;width:78.84px;height:10.9px;background:#3797ea;"></div>
<div style="position:absolute;left:0px;top:532.05px;width:790px;height:2.2px;background:#e2e5ed;"></div>
<div style="position:absolute;left:25px;top:496px;width:745px;height:12px;border-radius:50%;box-shadow:0 0 15px 7px rgba(0,0,0,0.36);"></div>
</div>
<div style="position:absolute;left:2057px;top:1871px;width:792px;height:50px;background:#fff;border:1px solid #c2c8e0;border-radius:7px;"></div>
<span class="t" style="left:2310.5px;top:1885.3px;font-size:23.4px;letter-spacing:0.84px;">More Deployment Metrics</span>
<div style="position:absolute;left:2937px;top:814px;width:792px;height:360px;background:#fff;border:1px solid #e2e5ed;"></div>
<div style="position:absolute;left:2937px;top:891px;width:792px;height:1px;background:#e2e5ed;"></div>
<span class="t" style="left:2960.2px;top:841.7px;font-size:23.4px;font-weight:700;letter-spacing:-0.42px;">Total Sessions</span>
<svg style="position:absolute;left:3632.9px;top:839px;" width="24" height="25" viewBox="0 0 24 25"><path d="M1.1 14.4V24.1H22.7V14.4M11.9 16.8V1.6M4.7 8.5L11.9 1.3L19.1 8.5" fill="none" stroke="#5e6972" stroke-width="2.3"/></svg>
<svg style="position:absolute;left:3684px;top:841px;" width="23" height="23" viewBox="0 0 23 23"><path d="M1.1 7.8V1.1H7.8M1.5 1.5L8.7 8.7M15 1.1H21.7V7.8M21.3 1.5L14.1 8.7M1.1 15V21.7H7.8M1.5 21.3L8.7 14.1M15 21.7H21.7V15M21.3 21.3L14.1 14.1" fill="none" stroke="#5e6972" stroke-width="2.2"/></svg>
<svg style="position:absolute;left:0;top:0" width="3782" height="1930"><defs><linearGradient id="g4" x1="0" y1="0" x2="0" y2="1"><stop offset="0" stop-color="#dfe3ea"/><stop offset="1" stop-color="#e9ebef"/></linearGradient></defs><path d="M2938.0 1151.9L2941.9 1015.0L2946.2 1008.1L2951.2 1024.4L2955.6 1066.6L2964.4 1062.5L2969.1 1065.6L2973.8 1060.6L2980.0 1061.2L2986.2 1065.6L2995.6 1068.1L3005.0 1065.0L3020.6 1061.9L3030.0 1064.4L3039.4 1062.5L3044.1 993.1L3050.3 990.6L3058.1 991.6L3062.8 995.6L3070.6 994.7L3075.3 1065.0L3092.5 1063.4L3105.0 1066.6L3117.5 1066.6L3123.8 1068.1L3148.8 1063.4L3155.0 1060.3L3158.1 1065.0L3162.8 1059.4L3170.6 1062.5L3189.4 1064.4L3194.1 1061.9L3201.9 1066.6L3211.2 1063.4L3230.0 1066.6L3245.6 1065.0L3255.0 1063.4L3258.8 996.2L3265.9 991.6L3273.8 994.7L3280.0 993.1L3283.1 996.2L3286.2 1071.2L3290.9 1066.6L3300.3 1066.6L3305.0 1062.5L3309.7 1066.6L3320.6 1069.7L3326.9 1065.0L3331.6 1068.1L3345.6 1065.6L3355.0 1066.6L3362.8 1063.4L3370.6 1067.5L3380.0 1063.8L3389.4 1064.4L3397.2 1070.6L3406.6 1063.4L3414.4 1066.6L3420.6 1063.4L3436.2 1065.6L3458.1 1066.6L3473.8 1065.0L3480.0 1067.5L3492.5 1065.0L3498.8 1068.1L3505.0 1063.4L3511.2 1065.0L3530.0 1066.6L3550.3 1068.1L3556.6 1106.2L3564.4 1103.1L3569.1 1110.3L3570.6 1077.5L3573.8 963.4L3577.5 1021.2L3580.0 1065.0L3598.8 1065.0L3604.4 1108.8L3617.5 1110.3L3631.6 1102.5L3636.2 1108.1L3651.9 1106.2L3658.1 1108.8L3661.9 1015.0L3667.5 1012.5L3671.2 1019.7L3678.4 1015.0L3689.4 1018.1L3695.6 1061.9L3705.0 1065.0L3717.5 1062.8L3725.3 1068.1L3728.0 1065.0L3728 1173L2938 1173Z" fill="url(#g4)"/><path d="M2938.0 1151.9L2941.9 1015.0L2946.2 1008.1L2951.2 1024.4L2955.6 1066.6L2964.4 1062.5L2969.1 1065.6L2973.8 1060.6L2980.0 1061.2L2986.2 1065.6L2995.6 1068.1L3005.0 1065.0L3020.6 1061.9L3030.0 1064.4L3039.4 1062.5L3044.1 993.1L3050.3 990.6L3058.1 991.6L3062.8 995.6L3070.6 994.7L3075.3 1065.0L3092.5 1063.4L3105.0 1066.6L3117.5 1066.6L3123.8 1068.1L3148.8 1063.4L3155.0 1060.3L3158.1 1065.0L3162.8 1059.4L3170.6 1062.5L3189.4 1064.4L3194.1 1061.9L3201.9 1066.6L3211.2 1063.4L3230.0 1066.6L3245.6 1065.0L3255.0 1063.4L3258.8 996.2L3265.9 991.6L3273.8 994.7L3280.0 993.1L3283.1 996.2L3286.2 1071.2L3290.9 1066.6L3300.3 1066.6L3305.0 1062.5L3309.7 1066.6L3320.6 1069.7L3326.9 1065.0L3331.6 1068.1L3345.6 1065.6L3355.0 1066.6L3362.8 1063.4L3370.6 1067.5L3380.0 1063.8L3389.4 1064.4L3397.2 1070.6L3406.6 1063.4L3414.4 1066.6L3420.6 1063.4L3436.2 1065.6L3458.1 1066.6L3473.8 1065.0L3480.0 1067.5L3492.5 1065.0L3498.8 1068.1L3505.0 1063.4L3511.2 1065.0L3530.0 1066.6L3550.3 1068.1L3556.6 1106.2L3564.4 1103.1L3569.1 1110.3L3570.6 1077.5L3573.8 963.4L3577.5 1021.2L3580.0 1065.0L3598.8 1065.0L3604.4 1108.8L3617.5 1110.3L3631.6 1102.5L3636.2 1108.1L3651.9 1106.2L3658.1 1108.8L3661.9 1015.0L3667.5 1012.5L3671.2 1019.7L3678.4 1015.0L3689.4 1018.1L3695.6 1061.9L3705.0 1065.0L3717.5 1062.8L3725.3 1068.1L3728.0 1065.0" fill="none" stroke="#c5cdd8" stroke-width="1.6" stroke-linejoin="round"/><path d="M2938 963.4H2973M2938 1151.9H2961M3714 963.4H3728M3714 1151.9H3728" stroke="#c5cad0" stroke-width="1" fill="none"/></svg>
<span class="t" style="left:2942.0px;top:935.5px;font-size:18px;color:#8a949c;letter-spacing:-0.52px;">821</span>
<span class="t" style="left:2942.0px;top:1126.1px;font-size:18px;color:#8a949c;letter-spacing:-1.02px;">80</span>
<span class="t" style="left:3019.0px;top:922.3px;font-size:244px;font-weight:700;letter-spacing:3.35px;text-shadow:0 0 5px rgba(255,255,255,0.8);">73.1k</span>
<div style="position:absolute;left:2937px;top:1203px;width:792px;height:639px;background:#fff;border:1px solid #e2e5ed;"></div>
<div style="position:absolute;left:2937px;top:1279px;width:792px;height:1px;background:#e2e5ed;"></div>
<span class="t" style="left:2960.2px;top:1230.7px;font-size:23.4px;font-weight:700;letter-spacing:0.07px;">Most Visited Pages</span>
<svg style="position:absolute;left:3632.9px;top:1228px;" width="24" height="25" viewBox="0 0 24 25"><path d="M1.1 14.4V24.1H22.7V14.4M11.9 16.8V1.6M4.7 8.5L11.9 1.3L19.1 8.5" fill="none" stroke="#5e6972" stroke-width="2.3"/></svg>
<svg style="position:absolute;left:3684px;top:1230px;" width="23" height="23" viewBox="0 0 23 23"><path d="M1.1 7.8V1.1H7.8M1.5 1.5L8.7 8.7M15 1.1H21.7V7.8M21.3 1.5L14.1 8.7M1.1 15V21.7H7.8M1.5 21.3L8.7 14.1M15 21.7H21.7V15M21.3 21.3L14.1 14.1" fill="none" stroke="#5e6972" stroke-width="2.2"/></svg>
<div style="position:absolute;left:3028px;top:1304.1px;width:690.7px;height:49.7px;background:#bfdcfb;"></div>
<span class="t" style="left:2960.5px;top:1317.6px;font-size:23.4px;font-weight:700;letter-spacing:0.31px;">183k</span>
<span class="t" style="left:3042.3px;top:1318.9px;font-size:23.4px;color:#0a0d10;letter-spacing:1.04px;">/department/sofas</span>
<div style="position:absolute;left:3028px;top:1356.25px;width:594.9000000000001px;height:49.7px;background:#bfdcfb;"></div>
<span class="t" style="left:2960.5px;top:1369.7px;font-size:23.4px;font-weight:700;letter-spacing:0.31px;">157k</span>
<span class="t" style="left:3042.3px;top:1371.0px;font-size:23.4px;color:#0a0d10;letter-spacing:1.24px;">/department/bedding</span>
<div style="position:absolute;left:3028px;top:1408.3999999999999px;width:585.2px;height:49.7px;background:#bfdcfb;"></div>
<span class="t" style="left:2960.5px;top:1421.9px;font-size:23.4px;font-weight:700;letter-spacing:0.31px;">155k</span>
<span class="t" style="left:3042.3px;top:1423.2px;font-size:23.4px;color:#0a0d10;letter-spacing:1.15px;">/department/bedding/product/?</span>
<div style="position:absolute;left:3028px;top:1460.55px;width:574.3000000000001px;height:49.7px;background:#bfdcfb;"></div>
<span class="t" style="left:2960.5px;top:1474.0px;font-size:23.4px;font-weight:700;letter-spacing:0.31px;">152k</span>
<span class="t" style="left:3042.3px;top:1475.3px;font-size:23.4px;color:#0a0d10;letter-spacing:1.07px;">/department/chairs</span>
<div style="position:absolute;left:3028px;top:1512.6999999999998px;width:568.1px;height:49.7px;background:#bfdcfb;"></div>
<span class="t" style="left:2960.5px;top:1526.2px;font-size:23.4px;font-weight:700;letter-spacing:0.31px;">150k</span>
<span class="t" style="left:3042.3px;top:1527.5px;font-size:23.4px;color:#0a0d10;letter-spacing:1.04px;">/department/chairs/product/?</span>
<div style="position:absolute;left:3028px;top:1564.85px;width:519.6px;height:49.7px;background:#bfdcfb;"></div>
<span class="t" style="left:2960.5px;top:1578.3px;font-size:23.4px;font-weight:700;letter-spacing:0.31px;">137k</span>
<span class="t" style="left:3042.3px;top:1579.6px;font-size:23.4px;color:#0a0d10;letter-spacing:1.02px;">/department/sofas/product/?</span>
<div style="position:absolute;left:3028px;top:1617.0px;width:424.4px;height:49.7px;background:#bfdcfb;"></div>
<span class="t" style="left:2960.5px;top:1630.5px;font-size:23.4px;font-weight:700;letter-spacing:0.74px;">112k</span>
<span class="t" style="left:3042.3px;top:1631.8px;font-size:23.4px;color:#0a0d10;letter-spacing:1.29px;">/department/lighting</span>
<div style="position:absolute;left:3028px;top:1669.1499999999999px;width:411.9px;height:49.7px;background:#bfdcfb;"></div>
<span class="t" style="left:2960.5px;top:1682.6px;font-size:23.4px;font-weight:700;letter-spacing:0.31px;">109k</span>
<span class="t" style="left:3042.3px;top:1683.9px;font-size:23.4px;color:#0a0d10;letter-spacing:1.19px;">/department/lighting/product/?</span>
<div style="position:absolute;left:3028px;top:1721.3px;width:266.5px;height:49.7px;background:#bfdcfb;"></div>
<span class="t" style="left:2973.5px;top:1734.8px;font-size:23.4px;font-weight:700;letter-spacing:0.48px;">70k</span>
<span class="t" style="left:3042.3px;top:1736.1px;font-size:23.4px;color:#0a0d10;">/</span>
<div style="position:absolute;left:3028px;top:1773.4499999999998px;width:84.0px;height:49.7px;background:#bfdcfb;"></div>
<span class="t" style="left:2973.5px;top:1786.9px;font-size:23.4px;font-weight:700;letter-spacing:0.48px;">21k</span>
<span class="t" style="left:3042.3px;top:1788.2px;font-size:23.4px;color:#0a0d10;letter-spacing:1.12px;">/cart</span>
<div style="position:absolute;left:2937px;top:1871px;width:792px;height:50px;background:#fff;border:1px solid #c2c8e0;border-radius:7px;"></div>
<span class="t" style="left:3219.5px;top:1885.3px;font-size:23.4px;letter-spacing:0.59px;">Product Analytics</span>
<svg style="position:absolute;left:3419.5px;top:1884.3px;" width="28" height="22" viewBox="0 0 28 22"><path d="M0 11h26M16 1.5l10 9.5-10 9.5" fill="none" stroke="#5e6972" stroke-width="2.3"/></svg>
<div style="position:absolute;left:0px;top:0px;width:82px;height:1930px;background:#282c38;z-index:7;"></div>
<div style="position:absolute;left:0;top:0;width:82px;height:1930px;z-index:8;">
<svg style="position:absolute;left:0;top:0" width="82" height="1930"><g fill="#dcdfe3"><ellipse cx="19.9" cy="14.5" rx="5.5" ry="7.3" transform="rotate(-12 19.9 14.5)"/><polygon points="25.3,11.1 27.9,10.1 31.0,8.3 36.2,8.8 39.3,7.8 41.4,5.4 43.7,4.8 46.5,5.9 48.9,9.8 50.1,13.2 48.3,14.0 46.3,13.2 44.9,12.2 46.5,16.5 48.9,22.2 49.9,26.9 49.1,30.0 47.8,31.6 51.7,31.0 33.1,34.1 33.6,48.6 31.0,46.5 26.9,42.5 21.7,41.4 24.6,37.7 24.8,34.1 21.2,30.0 19.9,24.3 20.2,21.7 24.3,19.6 25.6,15.5"/><ellipse cx="23.9" cy="49.1" rx="7.1" ry="7.8" transform="rotate(-20 23.9 49.1)"/><polygon points="32.1,34.4 58.7,30.8 60.2,48.1 35.2,53.3"/></g><polygon points="36.2,49.9 39.8,44.0 44.5,45.1 48.6,38.8 53.3,41.4 57.0,35.2 58.0,46.8" fill="#282c38"/><ellipse cx="33.4" cy="19.9" rx="2.6" ry="2" fill="#282c38" transform="rotate(-15 33.4 19.9)"/><ellipse cx="44.4" cy="17.6" rx="1.4" ry="1.9" fill="#282c38" transform="rotate(-25 44.4 17.6)"/><ellipse cx="45" cy="26.9" rx="2.9" ry="1.8" fill="#282c38" transform="rotate(-8 45 26.9)"/><path d="M31 30.5C33.5 33.5 38 35 42.5 33C44.5 32 46 31.5 48 31.8" fill="none" stroke="#282c38" stroke-width="1"/><path d="M23.2 7.5C25 11 25.8 16 24.6 19.5C23.8 21 22.5 21.5 21 21.6" fill="none" stroke="#282c38" stroke-width="0.9"/><path d="M22.5 42C26 41.5 29.5 44 31 48.5" fill="none" stroke="#282c38" stroke-width="0.9"/><circle cx="33.5" cy="287.5" r="9.3" fill="none" stroke="#b9bbb9" stroke-width="2.6"/><path d="M40.5 294.5L47.5 301.5" stroke="#b9bbb9" stroke-width="2.8"/><defs><linearGradient id="dv336" x1="0" x2="1"><stop offset="0" stop-color="#5c5f68" stop-opacity="0"/><stop offset="0.5" stop-color="#62656e"/><stop offset="1" stop-color="#5c5f68" stop-opacity="0"/></linearGradient></defs><rect x="11" y="336.0" width="50" height="1" fill="url(#dv336)"/><defs><linearGradient id="dv689" x1="0" x2="1"><stop offset="0" stop-color="#5c5f68" stop-opacity="0"/><stop offset="0.5" stop-color="#62656e"/><stop offset="1" stop-color="#5c5f68" stop-opacity="0"/></linearGradient></defs><rect x="11" y="689.0" width="50" height="1" fill="url(#dv689)"/><defs><linearGradient id="dv1042" x1="0" x2="1"><stop offset="0" stop-color="#5c5f68" stop-opacity="0"/><stop offset="0.5" stop-color="#62656e"/><stop offset="1" stop-color="#5c5f68" stop-opacity="0"/></linearGradient></defs><rect x="11" y="1042.0" width="50" height="1" fill="url(#dv1042)"/><path d="M26.5 376A12 12 0 1 1 24.8 390" fill="none" stroke="#b9bbb9" stroke-width="2.5"/><path d="M25.5 370.5V378H33" fill="none" stroke="#b9bbb9" stroke-width="2.5"/><path d="M37 377V385H30.5" fill="none" stroke="#b9bbb9" stroke-width="2.5"/><path d="M21.6 437.3V458.3H50" fill="none" stroke="#b9bbb9" stroke-width="1.9"/><path d="M25.1 448.3L30.7 439.5L39.5 447.6L43.9 443.2L48.3 455.8L25.1 455.2Z" fill="#b9bbb9"/><path d="M44 503.5A13 13 0 1 0 48 510" fill="none" stroke="#b9bbb9" stroke-width="2.5" stroke-dasharray="30 4 3 4 100"/><path d="M39.5 507A6.8 6.8 0 1 0 42.2 512.6" fill="none" stroke="#b9bbb9" stroke-width="2.5"/><path d="M35.4 512.6L47.5 500.5" stroke="#b9bbb9" stroke-width="2.6"/><g fill="#b9bbb9"><rect x="27.9" y="563.8" width="5" height="3.8"/><rect x="38.3" y="563.8" width="5" height="3.8"/><polygon points="27.0,568.8 33.3,568.8 33.3,579.5 31.4,582.6 31.4,590.4 22.0,590.4 22.0,580.7"/><polygon points="37.6,568.8 43.7,568.8 48.9,580.7 48.9,590.4 39.5,590.4 39.5,582.6 37.6,579.5"/><rect x="34.1" y="568.8" width="2.6" height="10.3"/></g><polygon points="34.8,643.5 46.4,636.3 46.4,648.5 34.8,655.4" fill="none" stroke="#b9bbb9" stroke-width="2.3"/><polyline points="41.4,632.8 29.7,639.7 29.7,652.9" fill="none" stroke="#b9bbb9" stroke-width="2.3"/><polyline points="36.4,629.8 24.7,636.6 24.7,649.8" fill="none" stroke="#b9bbb9" stroke-width="2.3"/><polygon points="27.4,722.8 33.7,726.5 33.7,733.8 27.4,737.4 21.1,733.8 21.1,726.5" fill="#b9bbb9"/><polygon points="35.4,736.3 41.7,740.0 41.7,747.2 35.4,750.9 29.1,747.2 29.1,740.0" fill="#b9bbb9"/><polygon points="43.4,724.1 48.6,727.1 48.6,733.1 43.4,736.1 38.2,733.1 38.2,727.1" fill="none" stroke="#b9bbb9" stroke-width="2.2"/><rect x="21.1" y="787.8" width="28.9" height="3.5" fill="#b9bbb9"/><rect x="21.1" y="795.0" width="5.5" height="3.5" fill="#b9bbb9"/><rect x="30.1" y="795.0" width="19.8" height="3.5" fill="#b9bbb9"/><rect x="30.1" y="802.3" width="10.7" height="3.5" fill="#b9bbb9"/><rect x="44.5" y="802.3" width="5.4" height="3.5" fill="#b9bbb9"/><rect x="35.4" y="809.4" width="5.6" height="3.5" fill="#b9bbb9"/><path d="M28.3 858V853.2H47.6V868.2H41.5" fill="none" stroke="#e4e4e2" stroke-width="2.6"/><path d="M25.5 866V861.3H36.7V875.3H33" fill="none" stroke="#e4e4e2" stroke-width="2.6"/><rect x="22.4" y="867.9" width="6" height="9.4" fill="none" stroke="#e4e4e2" stroke-width="2.6"/><path d="M35 924.5A6.6 6.6 0 1 0 29.5 931H40.5A6.2 6.2 0 1 1 35.5 940" fill="none" stroke="#b9bbb9" stroke-width="2.4"/><path d="M32.5 935.5L36 941L41 938" fill="none" stroke="#b9bbb9" stroke-width="2.2"/><path d="M35.3 983L45.2 987.5V997C45.2 1002 41 1006 35.3 1008C29.6 1006 25.4 1002 25.4 997V987.5Z" fill="none" stroke="#b9bbb9" stroke-width="2.3"/><path d="M35.3 983V1008M26 989.5L35 994.5M26 996L35 1001" stroke="#b9bbb9" stroke-width="2.3" fill="none"/><path d="M24.5 1098A13.2 13.2 0 0 1 38 1078" fill="none" stroke="#b9bbb9" stroke-width="3" stroke-dasharray="2.2 2"/><path d="M43.5 1077L38.5 1093.5A3 3 0 0 1 33 1091Z" fill="#b9bbb9"/><path d="M45.5 1099.5C49 1094 49.5 1089 47 1083C48 1090 47 1094 43.8 1098Z" fill="#b9bbb9" stroke="#b9bbb9" stroke-width="2.5" stroke-linejoin="round"/><rect x="21.6" y="1139.2" width="5.4" height="3.5" fill="#b9bbb9"/><rect x="29.1" y="1139.2" width="6.0" height="3.5" fill="#b9bbb9"/><rect x="37.6" y="1139.2" width="5.6" height="3.5" fill="#b9bbb9"/><rect x="21.6" y="1147.1" width="7.9" height="3.5" fill="#b9bbb9"/><rect x="21.6" y="1154.6" width="6.0" height="3.5" fill="#b9bbb9"/><circle cx="39.5" cy="1154.6" r="7.3" fill="#282c38" stroke="#b9bbb9" stroke-width="2.6"/><rect x="36.4" y="1152.7" width="5.6" height="3.5" fill="#b9bbb9"/><path d="M33.8 1161L27.3 1166.8" stroke="#b9bbb9" stroke-width="3" stroke-linecap="round"/><g fill="#b9bbb9"><rect x="21.3" y="1592.6" width="20.1" height="16.3"/><circle cx="31.4" cy="1587" r="3.3"/><rect x="29.6" y="1588" width="3.6" height="6"/><circle cx="46.4" cy="1600.7" r="3.2"/><rect x="40" y="1598.9" width="6" height="3.6"/></g><circle cx="30.8" cy="1604.5" r="3.1" fill="#282c38"/><rect x="29" y="1605" width="3.6" height="4.5" fill="#282c38"/><path d="M38.3 1649.0Q40.412 1656.4879999999998 47.9 1658.6Q40.412 1660.712 38.3 1668.1999999999998Q36.187999999999995 1660.712 28.699999999999996 1658.6Q36.187999999999995 1656.4879999999998 38.3 1649.0Z" fill="#b9bbb9"/><path d="M28.6 1662.1000000000001Q29.876 1666.624 34.4 1667.9Q29.876 1669.1760000000002 28.6 1673.7Q27.324 1669.1760000000002 22.8 1667.9Q27.324 1666.624 28.6 1662.1000000000001Z" fill="#b9bbb9"/><path d="M37 1722H46.5A3 3 0 0 1 49.5 1725V1737.5H32A3 3 0 0 1 29 1735" fill="none" stroke="#b9bbb9" stroke-width="2.2"/><rect x="22.1" y="1716" width="20.5" height="15" rx="3.5" fill="#282c38" stroke="#b9bbb9" stroke-width="2.3"/><path d="M29 1731V1725.5A3 3 0 0 1 32 1722.5H42.5" fill="none" stroke="#b9bbb9" stroke-width="2.2"/><circle cx="35" cy="1791" r="18" fill="#1e2a6b"/><g fill="#f06ab5"><rect x="27" y="1780" width="15" height="4"/><rect x="27" y="1784" width="4" height="4"/><rect x="38" y="1784" width="4" height="4"/><rect x="31" y="1788" width="7" height="4"/><rect x="20" y="1792" width="7" height="6"/><rect x="31" y="1792" width="7" height="10"/><rect x="42" y="1792" width="7" height="6"/><rect x="20" y="1798" width="4" height="6"/><rect x="27" y="1798" width="15" height="4"/><rect x="45" y="1798" width="4" height="6"/><rect x="27" y="1802" width="4" height="3"/><rect x="38" y="1802" width="4" height="3"/></g><rect x="0" y="1844.7" width="82" height="1" fill="#55565c"/><path d="M28.5 1868C29 1863.5 33 1861.5 37.5 1862C42.5 1862.5 46 1865.5 45.5 1869.5C45 1873 39.5 1874 38.5 1877V1879" fill="none" stroke="#c8c8c6" stroke-width="1.9"/><rect x="37.2" y="1881.3" width="2.6" height="2.6" fill="#c8c8c6"/></svg>
<span class="t" style="left:16.3px;top:1900.7px;font-size:20px;color:#c8c8c6;letter-spacing:0.09px;">Help</span>
</div>
</div></body></html>
